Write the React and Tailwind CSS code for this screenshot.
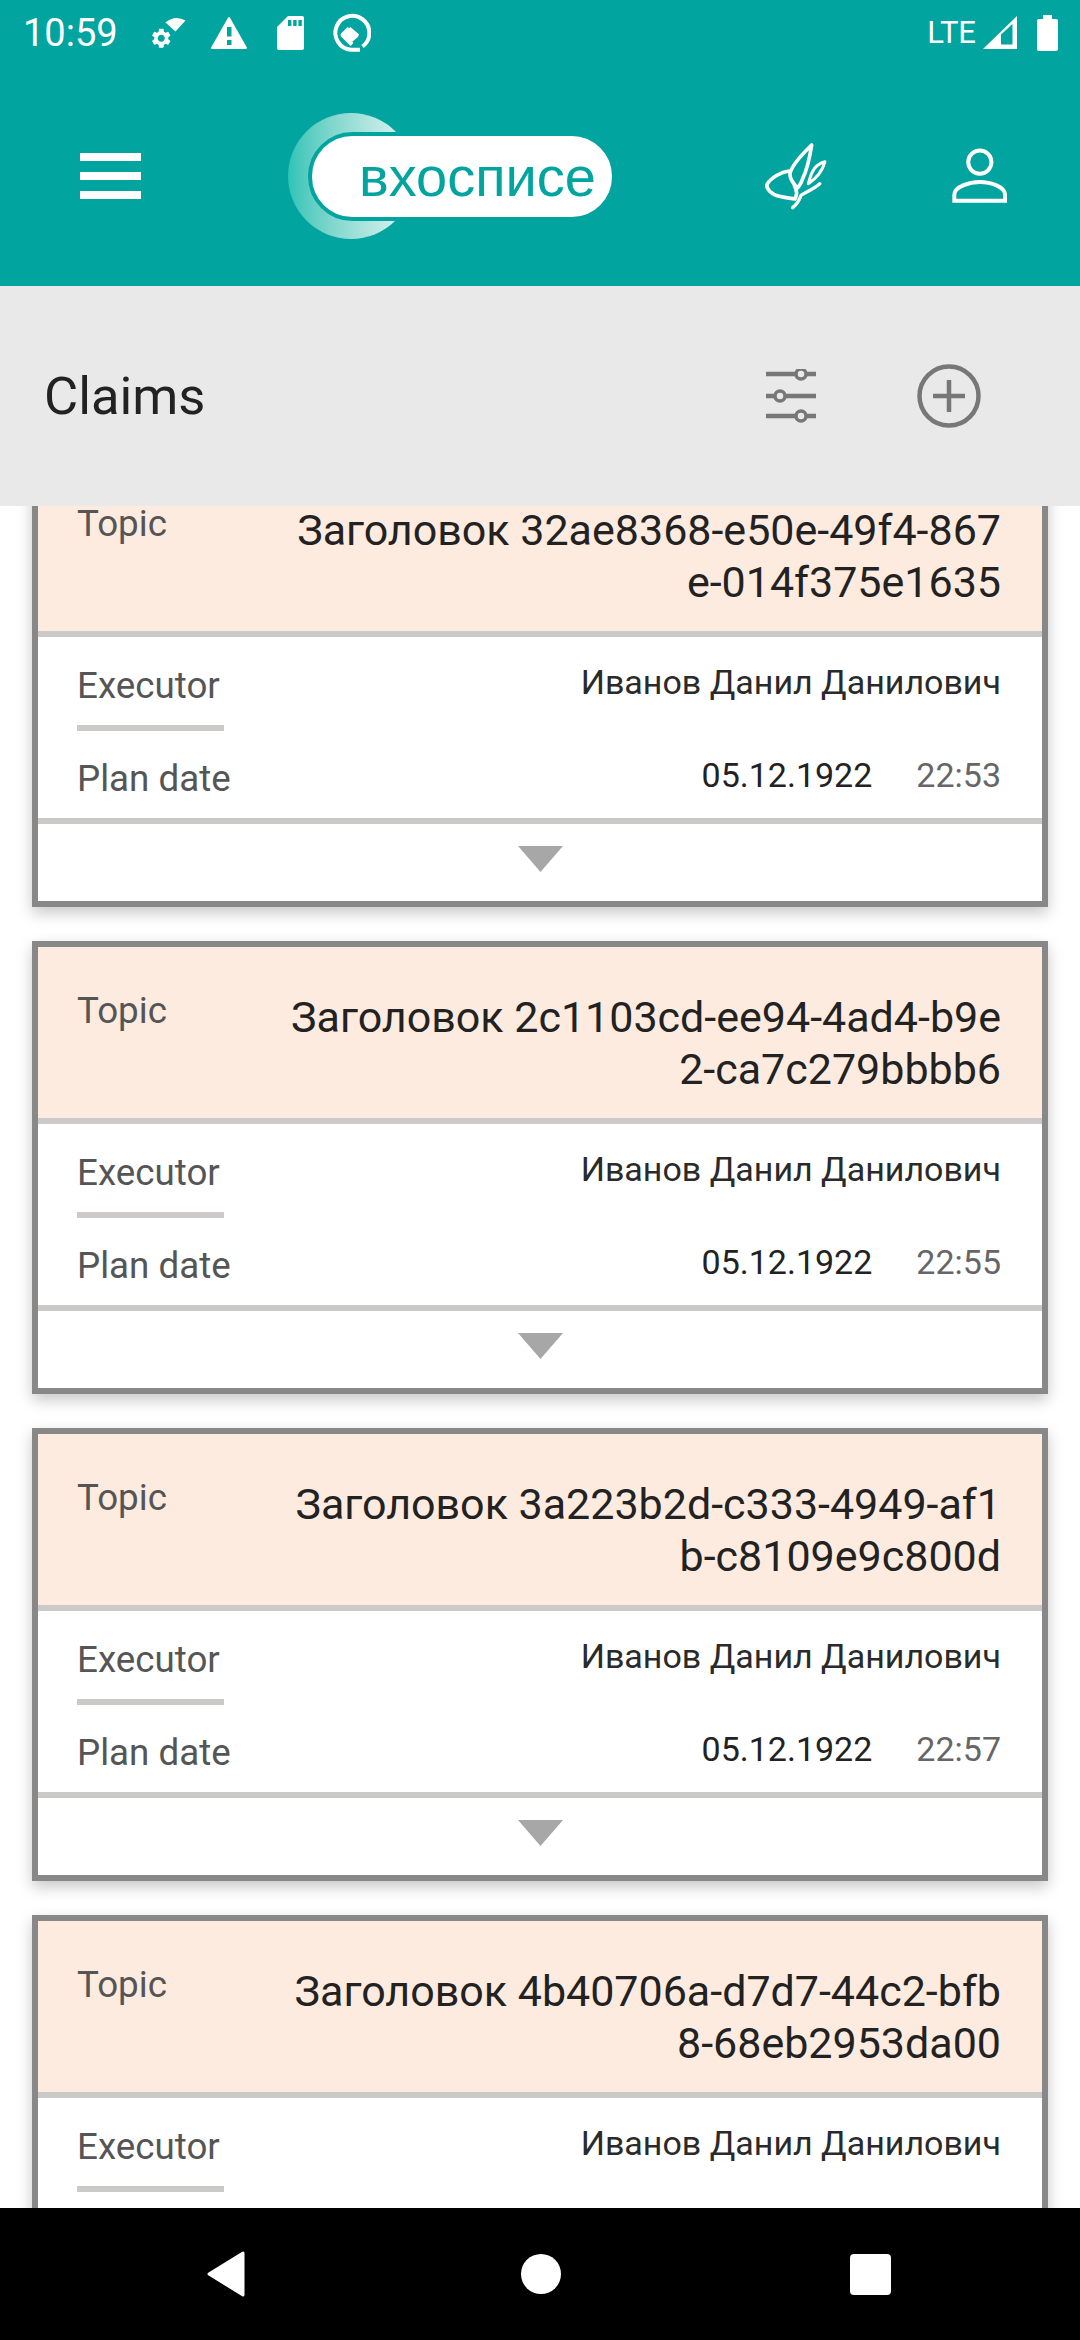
const TEAL = "#02a4a0";

function StatusGear() {
  return (
    <svg width="36" height="36" viewBox="150 16 36 36" className="block">
      <g transform="translate(149.5 27.5) scale(0.98)">
        <path fill="#fff" d="M19.14 12.94c.04-.3.06-.61.06-.94 0-.32-.02-.64-.07-.94l2.03-1.58c.18-.14.23-.41.12-.61l-1.92-3.32c-.12-.22-.37-.29-.59-.22l-2.39.96c-.5-.38-1.03-.7-1.62-.94l-.36-2.54c-.04-.24-.24-.41-.48-.41h-3.84c-.24 0-.43.17-.47.41l-.36 2.54c-.59.24-1.13.57-1.62.94l-2.39-.96c-.22-.08-.47 0-.59.22L2.74 8.87c-.12.21-.08.47.12.61l2.03 1.58c-.05.3-.09.63-.09.94s.02.64.07.94l-2.03 1.58c-.18.14-.23.41-.12.61l1.92 3.32c.12.22.37.29.59.22l2.39-.96c.5.38 1.03.7 1.62.94l.36 2.54c.05.24.24.41.48.41h3.84c.24 0 .44-.17.47-.41l.36-2.54c.59-.24 1.13-.56 1.62-.94l2.39.96c.22.08.47 0 .59-.22l1.92-3.32c.12-.22.07-.47-.12-.61l-2.01-1.58zM12 15.6c-1.98 0-3.6-1.62-3.6-3.6s1.62-3.6 3.6-3.6 3.6 1.62 3.6 3.6-1.62 3.6-3.6 3.6z" />
      </g>
      <path fill="#fff" d="M165.5 23.5 Q175 15.5 185.5 21.5 L175.5 32.5 Z" />
    </svg>
  );
}

function StatusAlert() {
  return (
    <svg width="38" height="34" viewBox="210 16 38 34" className="block">
      <path fill="#fff" stroke="#fff" strokeWidth="2" strokeLinejoin="round" d="M229 18 L246 48 L212 48 Z" />
      <rect x="227" y="27" width="4.5" height="9.5" fill={TEAL} />
      <rect x="227" y="40" width="4.5" height="5" fill={TEAL} />
    </svg>
  );
}

function StatusSd() {
  return (
    <svg width="28" height="34" viewBox="277 16 28 34" className="block">
      <path fill="#fff" d="M288 16 H302 Q304 16 304 18 V48 Q304 50 302 50 H279 Q277 50 277 48 V27 Z" />
      <rect x="288" y="20" width="3.4" height="6" fill={TEAL} />
      <rect x="293.2" y="20" width="3.4" height="6" fill={TEAL} />
      <rect x="298.4" y="20" width="3.4" height="6" fill={TEAL} />
    </svg>
  );
}

function StatusQ() {
  return (
    <svg width="40" height="40" viewBox="331 13 40 40" className="block">
      <path fill="none" stroke="#fff" strokeWidth="4" d="M362.5 46.5 A17 17 0 1 0 351 49.8 H360" />
      <path fill="none" stroke="#fff" strokeWidth="4" strokeLinejoin="round" d="M349 28.5 L358 36 M349 28.5 L342.5 35 L352 44.5" />
      <path fill="#fff" d="M348.5 27.5 L358.5 36.5 L352 42 L345 35 Z" />
    </svg>
  );
}

function SignalIcon() {
  return (
    <svg width="36" height="36" viewBox="982 15 36 36" className="block">
      <path fill="#fff" d="M983 49 L1017 16 V49 Z" />
      <path fill={TEAL} d="M1001 44.5 V34.5 L1012.5 24 V44.5 Z" />
    </svg>
  );
}

function BatteryIcon() {
  return (
    <svg width="22" height="37" viewBox="1037 15 22 37" className="block">
      <path fill="#fff" d="M1043 15 H1052 V19 H1056 Q1058 19 1058 21 V49 Q1058 51 1056 51 H1039 Q1037 51 1037 49 V21 Q1037 19 1039 19 H1043 Z" />
    </svg>
  );
}

function Hamburger() {
  return (
    <div className="flex w-[61px] flex-col gap-[11px]">
      <div className="h-[8px] bg-white" />
      <div className="h-[8px] bg-white" />
      <div className="h-[8px] bg-white" />
    </div>
  );
}

function Logo() {
  return (
    <div className="relative h-[126px] w-[328px]">
      <div className="absolute left-0 top-0 h-[126px] w-[126px] rounded-full bg-gradient-to-r from-[#2bc4b8] to-[#e6f7f5]" />
      <div className="absolute left-[20px] top-[19px] flex h-[89px] w-[308px] items-center rounded-full border-[4px] border-[#02a4a0] bg-white pl-[47px] font-['Liberation_Sans',sans-serif] text-[56px] leading-[76px] text-[#02a4a0]">
        вхосписе
      </div>
    </div>
  );
}

function Feather() {
  return (
    <svg width="64" height="68" viewBox="130 65 190 204" className="block" fill="none" stroke="#fff" strokeLinecap="round" strokeLinejoin="round">
      <path strokeWidth="11" d="M272 74 C268 100 262 140 245 175 C240 190 235 198 228 204 C222 190 205 180 207 160 C212 135 245 100 272 74 Z" />
      <path strokeWidth="9" d="M312 124 C285 130 272 150 262 190 C285 175 305 150 312 124 Z" />
      <path strokeWidth="11" d="M204 152 C180 155 150 172 138 192 C135 205 150 222 175 228 C190 232 205 233 222 236 C228 225 228 210 220 195" />
      <path strokeWidth="10" d="M215 262 C230 250 236 238 240 225 C255 215 280 205 296 190" />
    </svg>
  );
}

function Person() {
  return (
    <svg width="55" height="56" viewBox="668 86 166 168" className="block" fill="none" stroke="#fff" strokeWidth="12">
      <circle cx="752" cy="128" r="35" />
      <path d="M675 245 V226 C675 203 720 188 752 188 C785 188 828 203 828 226 V245 Z" />
    </svg>
  );
}

function FilterIcon() {
  return (
    <svg width="52" height="54" viewBox="765 370 52 54" className="block" fill="none" stroke="#777" strokeWidth="4.5">
      <path d="M766 375 H796 M806 375 H816" />
      <circle cx="801" cy="375" r="5" strokeWidth="3.5" />
      <path d="M766 397 H775 M785 397 H816" />
      <circle cx="780" cy="397" r="5" strokeWidth="3.5" />
      <path d="M766 417 H796 M806 417 H816" />
      <circle cx="801" cy="417" r="5" strokeWidth="3.5" />
    </svg>
  );
}

function PlusCircle() {
  return (
    <svg width="64" height="64" viewBox="0 0 64 64" className="block" fill="none" stroke="#777" strokeWidth="4.5">
      <circle cx="32" cy="32" r="29.5" />
      <path d="M32 16 V48 M16 32 H48" />
    </svg>
  );
}

function Chevron() {
  return (
    <svg width="45" height="26" viewBox="0 0 45 26" className="block">
      <path fill="#a8a7a7" d="M0 0 H45 L22.5 26 Z" />
    </svg>
  );
}

const CARDS = [
  { lines: ["Заголовок 32ae8368-e50e-49f4-867", "e-014f375e1635"], time: "22:53" },
  { lines: ["Заголовок 2c1103cd-ee94-4ad4-b9e", "2-ca7c279bbbb6"], time: "22:55" },
  { lines: ["Заголовок 3a223b2d-c333-4949-af1", "b-c8109e9c800d"], time: "22:57" },
  { lines: ["Заголовок 4b40706a-d7d7-44c2-bfb", "8-68eb2953da00"], time: "22:59" },
];

function Card({ lines, time }) {
  return (
    <div className="border-[6px] border-[#888888] bg-white shadow-[0_6px_14px_rgba(0,0,0,0.22)]">
      <div className="flex h-[171px] justify-between bg-[#feebe0] pl-[39px] pr-[41px]">
        <div className="pt-[42px] text-[36.75px] leading-[44px] text-[#555555]">Topic</div>
        <div className="pt-[44px] text-right text-[43px] leading-[52px] text-[#222222]">
          {lines.map((l) => (
            <div key={l}>{l}</div>
          ))}
        </div>
      </div>
      <div className="border-y-[6px] border-[#cbcac8] pl-[39px] pr-[41px]">
        <div className="flex items-start justify-between">
          <div className="w-[147px] border-b-[6px] border-[#cbcac8] pb-[17px] pt-[27px] text-[36.75px] leading-[44px] text-[#555555]">
            Executor
          </div>
          <div className="pt-[23px] text-[34px] leading-[44px] text-[#2a2a2a]">Иванов Данил Данилович</div>
        </div>
        <div className="flex items-start justify-between">
          <div className="pb-[17px] pt-[26px] text-[36.75px] leading-[44px] text-[#555555]">Plan date</div>
          <div className="flex gap-[44px] pt-[22px] text-[34px] leading-[44px]">
            <span className="text-[#222222]">05.12.1922</span>
            <span className="text-[#666666]">{time}</span>
          </div>
        </div>
      </div>
      <div className="flex h-[77px] justify-center pt-[22px]">
        <Chevron />
      </div>
    </div>
  );
}

export default function App() {
  return (
    <div className="flex h-[2340px] w-[1080px] flex-col overflow-hidden bg-white font-['Roboto',sans-serif]">
      <div className="bg-[#02a4a0]">
        <div className="flex h-[66px] items-center justify-between pl-[23px] pr-[21px] text-white">
          <div className="flex items-center">
            <span className="w-[127px] text-[38px] leading-[44px]">10:59</span>
            <StatusGear />
            <div className="ml-[24px]"><StatusAlert /></div>
            <div className="ml-[29px]"><StatusSd /></div>
            <div className="ml-[26px]"><StatusQ /></div>
          </div>
          <div className="flex items-center">
            <span className="text-[31px] leading-[40px]">LTE</span>
            <div className="ml-[6px]"><SignalIcon /></div>
            <div className="ml-[19px]"><BatteryIcon /></div>
          </div>
        </div>
        <div className="flex h-[220px] items-center pl-[80px]">
          <Hamburger />
          <div className="ml-[147px]"><Logo /></div>
          <div className="ml-[148px]"><Feather /></div>
          <div className="ml-[124px]"><Person /></div>
        </div>
      </div>
      <div className="relative z-10 flex h-[220px] items-center bg-[#e9e9e9] pl-[44px]">
        <div className="w-[721px] text-[52.5px] leading-[64px] text-[#222222]">Claims</div>
        <FilterIcon />
        <div className="ml-[100px]"><PlusCircle /></div>
      </div>
      <div className="min-h-0 flex-1 overflow-hidden">
        <div className="mx-[32px] -mt-[52px] flex flex-col gap-[34px]">
          {CARDS.map((c) => (
            <Card key={c.time} lines={c.lines} time={c.time} />
          ))}
        </div>
      </div>
      <div className="flex h-[132px] items-center bg-black pl-[207px]">
        <svg width="38" height="46" viewBox="0 0 38 46" className="block">
          <path fill="#fff" stroke="#fff" strokeWidth="3" strokeLinejoin="round" d="M36 2 V44 L2 23 Z" />
        </svg>
        <div className="ml-[276px] h-[40px] w-[40px] rounded-full bg-white" />
        <div className="ml-[289px] h-[41px] w-[41px] rounded-[4px] bg-white" />
      </div>
    </div>
  );
}
